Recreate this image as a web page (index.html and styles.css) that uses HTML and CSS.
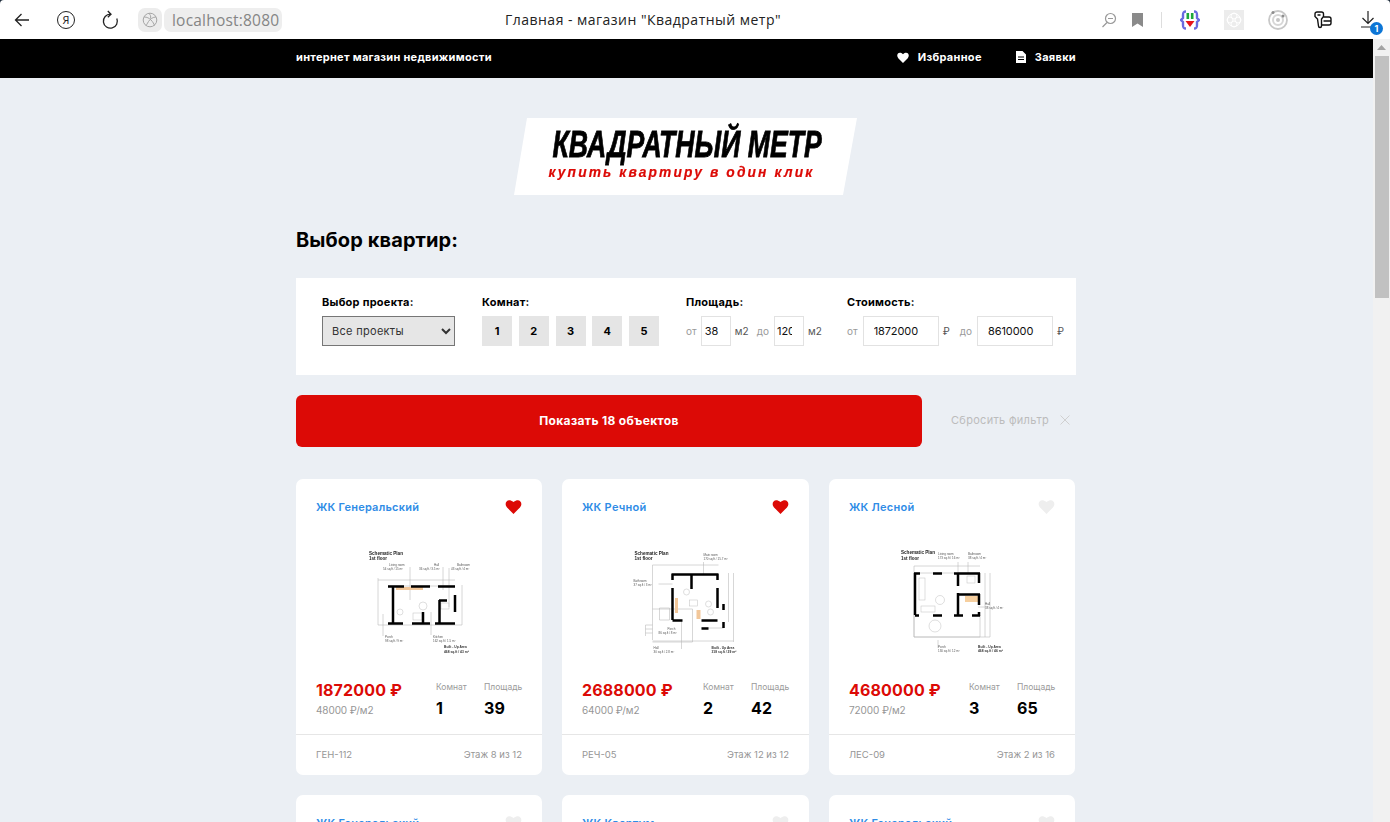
FILE: index.html
```html
<!DOCTYPE html>
<html lang="ru">
<head>
<meta charset="utf-8">
<title>Главная - магазин "Квадратный метр"</title>
<link rel="stylesheet" href="styles.css">
</head>
<body>
<div class="chrome">
  <div class="nav">
    <svg class="nav-icon back" width="16" height="14" viewBox="0 0 16 14"><path d="M15 7H1.500M7.500 1 1.500 7l6 6"/></svg>
    <span class="ya">Я</span>
    <svg class="nav-icon reload" width="18" height="20" viewBox="0 0 18 20"><path d="M9.500 4.200a7 7 0 1 0 6.300 4.200M6.800 1l3.200 3.200-3.200 3"/></svg>
    <span class="globe"><svg width="16" height="16" viewBox="0 0 16 16"><circle cx="8" cy="8" r="6.800"/><path d="M2 5c3 0 5 1 7 3s3 4 3.500 5.500M14 5c-3 0-6 2-7.500 4.500S4.500 13 4 13.500M7 1.500c1.500 1 2 3 1.500 5"/></svg></span>
    <span class="url">localhost:8080</span>
  </div>
  <div class="tab-title">Главная - магазин "Квадратный метр"</div>
  <div class="tools">
    <svg class="t-zoom" width="16" height="16" viewBox="0 0 16 16"><circle cx="9.500" cy="6.500" r="5"/><path d="M7 6.500h5M6 10.500l-4.500 4.500"/></svg>
    <svg class="t-mark" width="11" height="14" viewBox="0 0 11 14"><path d="M0 0h11v14l-5.500-3.500L0 14z"/></svg>
    <span class="t-sep"></span>
    <svg class="t-ext" width="20" height="20" viewBox="0 0 20 20"><path class="brace" d="M6 1.500C3 1.500 3 3 3 5v3L1 10l2 2v3c0 2 0 3.500 3 3.500M14 1.500c3 0 3 1.500 3 3.500v3l2 2-2 2v3c0 2 0 3.500-3 3.500"/><rect class="g" x="6.500" y="3" width="2.600" height="6"/><rect class="g" x="10.900" y="3" width="2.600" height="6"/><path class="r" d="M5.500 11h9L10 17z"/></svg>
    <svg class="t-rose" width="20" height="20" viewBox="0 0 20 20"><rect width="20" height="20"/><circle cx="10" cy="10" r="6.500"/><circle cx="10" cy="6" r="3"/><circle cx="10" cy="14" r="3"/><circle cx="6" cy="10" r="3"/><circle cx="14" cy="10" r="3"/></svg>
    <svg class="t-ring" width="20" height="20" viewBox="0 0 20 20"><circle class="a" cx="10" cy="10" r="9"/><circle class="b" cx="10" cy="10" r="5"/><circle class="c" cx="10" cy="10" r="2"/><circle class="e" cx="5" cy="2.500" r="1.500"/><circle class="e" cx="15" cy="6" r="1.500"/></svg>
    <svg class="t-key" width="18" height="18" viewBox="0 0 18 18"><path d="M3 1h4.500a2 2 0 0 1 2 2v2.500L7.500 8v7a1.500 1.500 0 0 1-3 0L3.500 8 1 5.500V3a2 2 0 0 1 2-2z"/><path d="M3.500 4h3M9.500 6H15a2 2 0 0 1 2 2v4a2 2 0 0 1-2 2H8M9.500 10H17"/></svg>
    <span class="t-down">
      <svg width="14" height="17" viewBox="0 0 14 17"><path d="M7 0v12M1.500 7 7 12.500 12.500 7M0 16h14"/></svg>
      <span class="badge">1</span>
    </span>
  </div>
</div>

<div class="viewport">
  <div class="page">
    <header class="topbar">
      <div class="wrap topbar-in">
        <span class="slogan">интернет магазин недвижимости</span>
        <nav class="top-links">
          <a class="top-link"><svg width="12" height="11" viewBox="0 0 24 22"><path class="heart-w" d="M12 22 2.500 12.300C-3 6 3.500-3 12 4.500 20.500-3 27 6 21.500 12.300z"/></svg>Избранное</a>
          <a class="top-link"><svg width="10" height="12" viewBox="0 0 10 12"><path class="doc" d="M0 0h6.500L10 3.500V12H0zM2 5.500v1h6v-1zM2 8v1h6V8z"/></svg>Заявки</a>
        </nav>
      </div>
    </header>

    <div class="logo">
      <div class="logo-title">КВАДРАТНЫЙ МЕТР</div>
      <div class="logo-sub">купить квартиру в один клик</div>
    </div>

    <main class="wrap">
      <h1 class="heading">Выбор квартир:</h1>

      <form class="filter">
        <div class="f-group">
          <div class="f-label">Выбор проекта:</div>
          <select class="f-select"><option>Все проекты</option></select>
        </div>
        <div class="f-group">
          <div class="f-label">Комнат:</div>
          <div class="rooms">
            <span class="room">1</span><span class="room">2</span><span class="room">3</span><span class="room">4</span><span class="room">5</span>
          </div>
        </div>
        <div class="f-group">
          <div class="f-label">Площадь:</div>
          <div class="range">
            <span class="muted">от</span><input class="inp inp-s" value="38"><span class="unit">м2</span>
            <span class="muted">до</span><input class="inp inp-s inp-cut" value="120"><span class="unit">м2</span>
          </div>
        </div>
        <div class="f-group">
          <div class="f-label">Стоимость:</div>
          <div class="range">
            <span class="muted">от</span><input class="inp inp-l" value="1872000"><span class="unit unit-cost">₽</span>
            <span class="muted">до</span><input class="inp inp-l" value="8610000"><span class="unit unit-cost">₽</span>
          </div>
        </div>
      </form>

      <div class="actions">
        <button class="show" type="button">Показать 18 объектов</button>
        <a class="reset">Сбросить фильтр<svg width="10" height="10" viewBox="0 0 10 10"><path d="M.5.500l9 9M9.500.500l-9 9"/></svg></a>
      </div>

      <section class="cards">
        <article class="card">
          <div class="card-head"><span class="card-name">ЖК Генеральский</span><svg class="heart on" width="17" height="15" viewBox="0 0 24 22"><path d="M12 22 2.500 12.300C-3 6 3.500-3 12 4.500 20.500-3 27 6 21.500 12.300z"/></svg></div>
          <svg class="plan" width="160" height="130" viewBox="339 535 160 130">
            <path class="d" d="M378 580H455M378 578V625M378 625H462M462 585V625M410 567V600M443 567V590M449 568V607M383 614V636M431 612V635M388 586H455"/>
            <circle class="f" cx="423" cy="606" r="4"/><circle class="f" cx="400" cy="612" r="3"/><rect class="f" x="413" y="613" width="9" height="7"/><rect class="f" x="441" y="603" width="8" height="6"/>
            <path class="o" d="M396 588.500H423"/>
            <path class="w" d="M388 586.500H404M411 586.500H430M438 586.500H455M393 586V623M388 623.500H403M412 623.500H430M435 623.500H455M455 595V612M439.500 600V623M439 600.500H447M423 612V623"/>
            <text class="pt" x="369" y="555">Schematic Plan</text><text class="pt" x="369" y="560">1st floor</text>
            <text class="pl" x="389" y="566">Living room</text><text class="pl" x="383" y="569.500">54 sq.ft / 15 m²</text>
            <text class="pl" x="434" y="566">Hall</text><text class="pl" x="419" y="569.500">36 sq.ft / 3.5 m²</text>
            <text class="pl" x="457" y="566">Bathroom</text><text class="pl" x="451" y="569.500">43 sq.ft / 4 m²</text>
            <text class="pl" x="385" y="638">Porch</text><text class="pl" x="385" y="641.500">98 sq.ft / 9 m²</text>
            <text class="pl" x="433" y="638">Kitchen</text><text class="pl" x="433" y="641.500">162 sq.ft / 1.5 m²</text>
            <text class="pb" x="444" y="648">Built - Up Area</text><text class="pb" x="444" y="652.500">468 sq.ft / 43 m²</text>
          </svg>
          <div class="card-info">
            <div class="prices"><div class="price">1872000 ₽</div><div class="per">48000 ₽/м2</div></div>
            <div class="specs"><div class="spec s1"><span class="s-l">Комнат</span><b class="s-v">1</b></div><div class="spec s2"><span class="s-l">Площадь</span><b class="s-v">39</b></div></div>
          </div>
          <div class="card-foot"><span>ГЕН-112</span><span>Этаж 8 из 12</span></div>
        </article>

        <article class="card">
          <div class="card-head"><span class="card-name">ЖК Речной</span><svg class="heart on" width="17" height="15" viewBox="0 0 24 22"><path d="M12 22 2.500 12.300C-3 6 3.500-3 12 4.500 20.500-3 27 6 21.500 12.300z"/></svg></div>
          <svg class="plan" width="160" height="130" viewBox="605.500 535 160 130">
            <path class="d" d="M652 565H718M652 565V640M733 573V642M728 573V622M652 609H692V642H652M659 608H669V620H659zM645 625H652M645 629H652M645 633H652M645 625V636M652 641H733M703 562V574M658 584H672M681 620V649M701 628H723"/>
            <rect class="f" x="689" y="600" width="8" height="6"/><circle class="f" cx="708" cy="604" r="3"/><circle class="f" cx="686" cy="592" r="3"/><circle class="f" cx="710" cy="612" r="3"/>
            <path class="o" d="M676 598V613"/><path class="o2" d="M698 610V619"/>
            <path class="w" d="M671 574.500H718M672 574V580M672 588V620M691 574V589M717 574V580M717 588V608M723 604V610M723 622V628M672 620.500H682M701 620.500H717M701 628.500H708"/>
            <text class="pt" x="634" y="555">Schematic Plan</text><text class="pt" x="634" y="560">1st floor</text>
            <text class="pl" x="703" y="556">Main room</text><text class="pl" x="703" y="560">170 sq.ft / 15.7 m²</text>
            <text class="pl" x="633" y="582">Bathroom</text><text class="pl" x="633" y="586">37 sq.ft / 3 m²</text>
            <text class="pl" x="667" y="630">Porch</text><text class="pl" x="658" y="633.500">86 sq.ft / 8 m²</text>
            <text class="pl" x="653" y="649">Hall</text><text class="pl" x="653" y="652.500">30 sq.ft / 2.8 m²</text>
            <text class="pb" x="711" y="649">Built - Up Area</text><text class="pb" x="711" y="653">318 sq.ft / 29 m²</text>
          </svg>
          <div class="card-info">
            <div class="prices"><div class="price">2688000 ₽</div><div class="per">64000 ₽/м2</div></div>
            <div class="specs"><div class="spec s1"><span class="s-l">Комнат</span><b class="s-v">2</b></div><div class="spec s2"><span class="s-l">Площадь</span><b class="s-v">42</b></div></div>
          </div>
          <div class="card-foot"><span>РЕЧ-05</span><span>Этаж 12 из 12</span></div>
        </article>

        <article class="card">
          <div class="card-head"><span class="card-name">ЖК Лесной</span><svg class="heart" width="17" height="15" viewBox="0 0 24 22"><path d="M12 22 2.500 12.300C-3 6 3.500-3 12 4.500 20.500-3 27 6 21.500 12.300z"/></svg></div>
          <svg class="plan" width="160" height="130" viewBox="872 535 160 130">
            <path class="d" d="M914 566H980M914 566V637M990 573V637M985 573V637M914 615V637H980V615M914 637H990M938 640V648M958 562V573M968 562V573M978 607H985M958 573H980M914 573H954"/>
            <circle class="f" cx="940" cy="600" r="4.500"/><circle class="f" cx="935" cy="626" r="6"/><rect class="f" x="919" y="578" width="6" height="22"/><rect class="f" x="921" y="606" width="14" height="6"/><rect class="f" x="967" y="576" width="8" height="7"/>
            <rect class="of" x="965" y="596" width="13" height="6"/>
            <path class="w" d="M914 573.500H920M933 573.500H942M954 573.500H980M915 573V615M915 615.500H919M933 615.500H942M954 615.500H963M972 615.500H980M958 573V586M958 593V615M958 594.500H980M979 573V583M979 594V605M979 612V616"/>
            <text class="pt" x="901" y="554">Schematic Plan</text><text class="pt" x="901" y="560">1st floor</text>
            <text class="pl" x="938" y="555">Living room</text><text class="pl" x="938" y="559">173 sq.ft / 16 m²</text>
            <text class="pl" x="968" y="555">Bathroom</text><text class="pl" x="968" y="559">38 sq.ft / 4 m²</text>
            <text class="pl" x="985" y="605">Hall</text><text class="pl" x="985" y="609">38 sq.ft / 4 m²</text>
            <text class="pl" x="938" y="648">Porch</text><text class="pl" x="938" y="652">130 sq.ft / 12 m²</text>
            <text class="pb" x="978" y="648">Built - Up Area</text><text class="pb" x="978" y="652">468 sq.ft / 46 m²</text>
          </svg>
          <div class="card-info">
            <div class="prices"><div class="price">4680000 ₽</div><div class="per">72000 ₽/м2</div></div>
            <div class="specs"><div class="spec s1"><span class="s-l">Комнат</span><b class="s-v">3</b></div><div class="spec s2"><span class="s-l">Площадь</span><b class="s-v">65</b></div></div>
          </div>
          <div class="card-foot"><span>ЛЕС-09</span><span>Этаж 2 из 16</span></div>
        </article>

        <article class="card">
          <div class="card-head"><span class="card-name">ЖК Генеральский</span><svg class="heart" width="17" height="15" viewBox="0 0 24 22"><path d="M12 22 2.500 12.300C-3 6 3.500-3 12 4.500 20.500-3 27 6 21.500 12.300z"/></svg></div>
        </article>
        <article class="card">
          <div class="card-head"><span class="card-name">ЖК Квартум</span><svg class="heart" width="17" height="15" viewBox="0 0 24 22"><path d="M12 22 2.500 12.300C-3 6 3.500-3 12 4.500 20.500-3 27 6 21.500 12.300z"/></svg></div>
        </article>
        <article class="card">
          <div class="card-head"><span class="card-name">ЖК Генеральский</span><svg class="heart" width="17" height="15" viewBox="0 0 24 22"><path d="M12 22 2.500 12.300C-3 6 3.500-3 12 4.500 20.500-3 27 6 21.500 12.300z"/></svg></div>
        </article>
      </section>
    </main>
  </div>

  <div class="scrollbar">
    <svg class="sb-up" width="9" height="5" viewBox="0 0 9 5"><path d="M4.500 0 9 5H0z"/></svg>
    <div class="sb-thumb"></div>
  </div>
</div>
</body>
</html>
```

FILE: styles.css
```css
* { box-sizing: border-box; }
html, body { margin: 0; height: 822px; overflow: hidden; background: #1d2b3a; }
body { font-family: Inter, "Noto Sans", sans-serif; color: #000; display: flex; flex-direction: column; }

/* browser chrome */
.chrome { height: 39px; flex: none; background: #fff; display: flex; align-items: center; border-radius: 4px 4px 0 0; font-family: "Open Sans", sans-serif; }
.nav { width: 505px; flex: none; display: flex; align-items: center; padding-left: 14px; }
.nav-icon { fill: none; stroke: #222; stroke-width: 1.300; }
.back { margin-right: 27px; }
.ya { width: 18px; height: 18px; border: 1.300px solid #222; border-radius: 50%; font-size: 11px; line-height: 16px; text-align: center; color: #222; margin-right: 26px; }
.reload { margin-right: 19px; }
.globe { width: 24px; height: 24px; border-radius: 7px; background: #ececec; display: flex; align-items: center; justify-content: center; margin-right: 2px; }
.globe svg { fill: none; stroke: #a5a5a5; stroke-width: 1; }
.url { width: 118px; height: 24px; border-radius: 7px; background: #eeeeee; color: #858585; font-size: 15.500px; line-height: 24px; padding-left: 8px; white-space: nowrap; letter-spacing: .2px; }
.tab-title { font-size: 14px; color: #222; letter-spacing: .48px; white-space: nowrap; width: 276px; flex: none; padding-bottom: 1px; }
.tools { flex: 1; display: flex; align-items: center; padding-left: 320px; }
.t-zoom { fill: none; stroke: #999; stroke-width: 1.200; margin-right: 15px; }
.t-mark { fill: #8a8a8a; margin-right: 18px; }
.t-sep { width: 1px; height: 16px; background: #ddd; margin-right: 18px; }
.t-ext { margin-right: 24px; }
.brace { fill: none; stroke: #6a6ae0; stroke-width: 2.400; }
.g { fill: #1fa83a; }
.r { fill: #e8141c; }
.t-rose { margin-right: 24px; }
.t-rose rect { fill: #ececec; }
.t-rose circle { fill: none; stroke: #fff; stroke-width: 1; }
.t-ring { margin-right: 26px; }
.t-ring .a { fill: none; stroke: #c8c8c8; stroke-width: 1.800; }
.t-ring .b { fill: none; stroke: #d6d6d6; stroke-width: 2; }
.t-ring .c { fill: #c6c6c6; }
.t-ring .e { fill: #8e8e8e; }
.t-key { fill: none; stroke: #111; stroke-width: 1.400; margin-right: 29px; }
.t-down { position: relative; display: block; width: 14px; height: 17px; }
.t-down svg { fill: none; stroke: #222; stroke-width: 1.200; display: block; }
.badge { position: absolute; left: 9px; top: 11px; width: 13px; height: 13px; border-radius: 50%; background: #0d76d6; color: #fff; font: 700 9px/13px Inter, sans-serif; text-align: center; }

/* viewport */
.viewport { flex: 1; min-height: 0; display: flex; background: #ebeff4; }
.page { flex: 1; min-width: 0; overflow: hidden; }
.scrollbar { width: 17px; flex: none; background: #f1f1f1; display: flex; flex-direction: column; align-items: center; padding-top: 6px; }
.sb-up { fill: #a3a3a3; }
.sb-thumb { width: 14px; height: 242px; background: #c1c1c1; margin-top: 6px; }

.wrap { width: 780px; margin-left: 296px; }

/* top bar */
.topbar { height: 39px; background: #000; }
.topbar-in { height: 100%; padding-bottom: 3px; display: flex; align-items: center; justify-content: space-between; color: #fff; }
.slogan { font-size: 11px; font-weight: 700; letter-spacing: .28px; }
.top-links { display: flex; gap: 34px; }
.top-link { display: flex; align-items: center; gap: 9px; font-size: 11px; font-weight: 700; letter-spacing: .3px; color: #fff; }
.heart-w, .doc { fill: #fff; fill-rule: evenodd; }

/* logo */
.logo { width: 343px; height: 77px; margin: 40px 0 0 514px; background: #fff; clip-path: polygon(13px 0, 100% 0, 329px 100%, 0 100%); display: flex; flex-direction: column; align-items: center; }
.logo-title { font-family: "Liberation Sans", sans-serif; font-style: italic; font-weight: 700; font-size: 37px; line-height: 36px; margin-top: 9px; -webkit-text-stroke: .8px #000; white-space: nowrap; transform: scaleX(.72); margin-left: 4px; }
.logo-sub { font-family: "Liberation Sans", sans-serif; font-style: italic; font-weight: 700; font-size: 15px; line-height: 18px; color: #dc0a06; letter-spacing: 2.300px; white-space: nowrap; margin-right: 8px; transform: scaleX(.92); -webkit-text-stroke: .2px #dc0a06; }

.heading { margin: 0; padding-top: 33px; height: 83px; font-size: 20px; line-height: 24px; font-weight: 700; letter-spacing: .1px; }

/* filter */
.filter { height: 97px; background: #fff; padding: 17px 0 0 26px; display: grid; grid-template-columns: 160px 204px 161px 1fr; }
.f-label { font-size: 11px; font-weight: 700; line-height: 14px; margin-bottom: 7px; letter-spacing: .25px; }
.f-select { width: 133px; height: 30px; background: #e6e6e6; border: 1px solid #767676; border-radius: 0; font: 11px Inter, sans-serif; color: #333; padding-left: 5px; letter-spacing: .3px; }
.rooms { display: flex; gap: 6.750px; }
.room { width: 30px; height: 30px; background: #e5e5e5; font-size: 11px; font-weight: 700; display: flex; align-items: center; justify-content: center; }
.range { display: flex; align-items: center; height: 30px; }
.muted { font-size: 10px; color: #9a9a9a; }
.unit { font-size: 10px; color: #555; margin: 0 8px 0 4px; letter-spacing: .1px; }
.unit-cost { margin-right: 10px; }
.inp { height: 30px; border: 1px solid #e2e2e2; margin-left: 5px; font: 11px Inter, sans-serif; color: #111; outline: 0; background: #fff; }
.inp-s { width: 30px; padding: 0 3px; margin-left: 4px; }
.inp-cut { padding: 0 11px 0 2px; margin-left: 5px; }
.inp-l { width: 76px; padding: 0 10px; letter-spacing: -.1px; }

/* actions */
.actions { display: flex; align-items: center; margin-top: 20px; height: 52px; }
.show { width: 626px; height: 52px; border: 0; border-radius: 6px; background: #dc0a06; color: #fff; font: 700 12px Inter, sans-serif; letter-spacing: .35px; padding: 0 0 2px; }
.reset { margin-left: 29px; padding-bottom: 2px; font-size: 11px; color: #bcbcbc; display: flex; align-items: center; gap: 11px; letter-spacing: .3px; }
.reset svg { fill: none; stroke: #d0d0d0; stroke-width: 1; }

/* cards */
.cards { display: grid; grid-template-columns: 246px 247px 246px; gap: 20px; margin-top: 32px; }
.card { background: #fff; border-radius: 7px; height: 296px; overflow: hidden; }
.card-head { height: 56px; padding: 14px 20px 0; display: flex; justify-content: space-between; align-items: flex-start; }
.card-name { font-size: 11px; font-weight: 600; line-height: 28px; color: #2f8ce6; letter-spacing: .25px; }
.heart { margin-top: 6px; fill: #eeeeee; }
.heart.on { fill: #dc0a06; }
.plan { display: block; margin: 0 auto; filter: blur(.4px); }
.d { fill: none; stroke: #b5b5b5; stroke-width: .55; }
.w { fill: none; stroke: #000; stroke-width: 2.500; }
.o { fill: none; stroke: #f2c79a; stroke-width: 3; }
.o2 { fill: none; stroke: #f2c79a; stroke-width: 4; }
.of { fill: #f6cf9f; }
.f { fill: none; stroke: #c4c4c4; stroke-width: .55; }
.pt { font: 700 4.600px "Liberation Sans", sans-serif; fill: #222; }
.pl { font: 3px "Liberation Sans", sans-serif; fill: #555; }
.pb { font: 700 3.300px "Liberation Sans", sans-serif; fill: #333; }

.card-info { height: 69px; padding: 15px 20px 0; display: flex; }
.prices { flex: 1; }
.price { font-size: 16px; line-height: 20px; font-weight: 700; color: #dc0a06; letter-spacing: .15px; white-space: nowrap; }
.per { font-size: 10px; line-height: 14px; margin-top: 3px; color: #969696; letter-spacing: -.1px; }
.specs { display: flex; flex: none; }
.spec { display: flex; flex-direction: column; }
.s1 { width: 48px; }
.s2 { width: 38px; }
.s-l { font-size: 8.500px; line-height: 14px; color: #9a9a9a; white-space: nowrap; }
.s-v { font-size: 16px; line-height: 20px; margin-top: 4px; font-weight: 700; letter-spacing: .2px; }
.card-foot { height: 41px; border-top: 1px solid #e6e6e6; padding: 0 20px 2px; display: flex; align-items: center; justify-content: space-between; font-size: 9.500px; color: #969696; }
```
